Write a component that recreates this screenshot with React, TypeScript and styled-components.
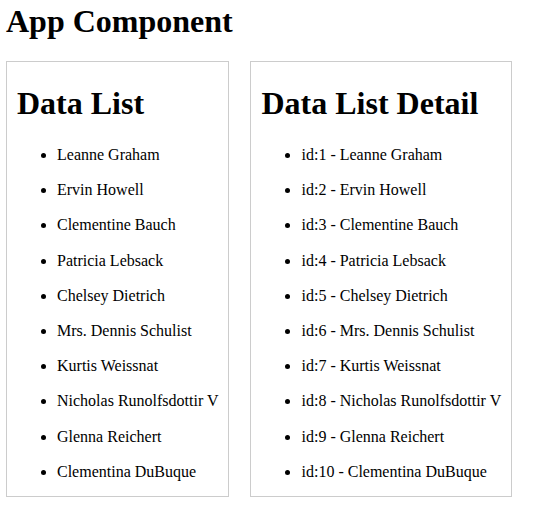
import React from 'react';
import styled, {createGlobalStyle} from "styled-components";

const users = [
    {id: 1, name: 'Leanne Graham'},
    {id: 2, name: 'Ervin Howell'},
    {id: 3, name: 'Clementine Bauch'},
    {id: 4, name: 'Patricia Lebsack'},
    {id: 5, name: 'Chelsey Dietrich'},
    {id: 6, name: 'Mrs. Dennis Schulist'},
    {id: 7, name: 'Kurtis Weissnat'},
    {id: 8, name: 'Nicholas Runolfsdottir V'},
    {id: 9, name: 'Glenna Reichert'},
    {id: 10, name: 'Clementina DuBuque'},
];

const GlobalStyle = createGlobalStyle`
  body {
    margin: 0;
    background: #fff;
    color: #000;
    font-family: "Liberation Serif", "Times New Roman", serif;
  }
`

const DataList = () => (
    <Panel>
        <PanelTitle>Data List</PanelTitle>
        <List>
            {users.map(u => <Item key={u.id}>{u.name}</Item>)}
        </List>
    </Panel>
);

const DataListDetail = () => (
    <Panel>
        <PanelTitle>Data List Detail</PanelTitle>
        <List>
            {users.map(u => <Item key={u.id}>id:{u.id} - {u.name}</Item>)}
        </List>
    </Panel>
);

export default function App() {
    return (
        <>
            <GlobalStyle/>
            <Page>
                <Title>App Component</Title>
                <Row>
                    <DataList/>
                    <DataListDetail/>
                </Row>
            </Page>
        </>
    );
}

const Page = styled.div`
  padding: 0 6px;
`
const Title = styled.h1`
  margin: 3px 0 21px;
  font-size: 32px;
  font-weight: 700;
  line-height: normal;
`
const Row = styled.div`
  display: flex;
  align-items: flex-start;
  gap: 21px;
`
const Panel = styled.section`
  flex: none;
  border: 1px solid #cccccc;
  padding: 0 10px;
`
const PanelTitle = styled.h1`
  margin: 23px 0 0;
  font-size: 32px;
  font-weight: 700;
  line-height: normal;
`
const List = styled.ul`
  margin: 24px 0 15px;
  padding-left: 40px;
  list-style: disc;
`
const Item = styled.li`
  font-size: 16px;
  line-height: 18.4px;
  & + & {
    margin-top: 16.8px;
  }
`
